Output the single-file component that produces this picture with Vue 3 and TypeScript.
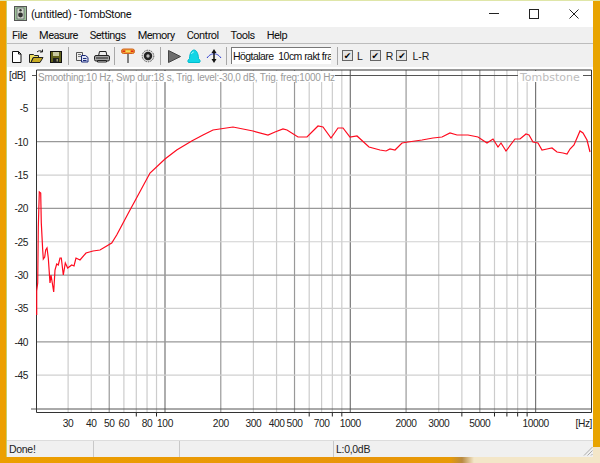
<script setup lang="ts">
const menus = ['File', 'Measure', 'Settings', 'Memory', 'Control', 'Tools', 'Help']
const fx = (f: number) => 165 + 185.3 * Math.log10(f / 100)
const minor = [30, 40, 60, 70, 80, 90, 300, 400, 600, 700, 800, 900, 3000, 4000, 6000, 7000, 8000, 9000]
const mid = [50, 200, 500, 2000, 5000]
const major = [100, 1000, 10000]
const labelled = [30, 40, 50, 60, 80, 100, 200, 300, 400, 500, 700, 1000, 2000, 3000, 5000, 10000]
const all = [...minor, ...mid, ...major]
const unlabelled = all.filter((f) => !labelled.includes(f))
const fy = (d: number) => 75 + 6.67 * d
const dbs = [5, 10, 15, 20, 25, 30, 35, 40, 45]
const darkDb = [10, 20, 30, 40]
const curve: number[][] = [
  [36.7, 315], [36.7, 291], [37.7, 283], [38.3, 227], [39.3, 192], [40.7, 193], [41.3, 223], [42.7, 250], [43.3, 259],
  [44.7, 257], [45.7, 250], [47, 248], [48.3, 258], [50, 283], [51, 275], [52.3, 283], [53.7, 292], [55, 270],
  [56.7, 264], [58.3, 265], [60, 258], [61.3, 258], [63.3, 275], [65.3, 263], [67.7, 268], [71.7, 265], [74, 266],
  [76, 258], [80, 260], [86, 253], [93, 251], [100, 250], [111.7, 243], [116.7, 235], [130, 210], [136, 199],
  [150, 173], [165, 159], [176.7, 150], [191.7, 141], [203, 135], [213, 130], [233, 127], [253, 131], [268, 135],
  [275, 132], [283, 129], [287, 130], [298, 137], [307, 137], [318, 126], [323, 127], [331, 138], [338, 128],
  [343, 128], [350, 137], [357, 136], [369, 147], [380, 150], [386, 151], [390, 149], [395, 150], [402, 143],
  [408, 142], [422, 140], [433, 138], [442, 137], [450, 133], [457, 135], [468, 135], [478, 137], [487, 143],
  [493, 139], [498, 147], [501, 143], [506, 151], [515, 139], [520, 139], [526, 134], [529, 135], [533, 142],
  [538, 143], [542, 150], [547, 149], [552, 148], [557, 152], [563, 153], [567, 154], [570, 149], [574, 145],
  [580, 131], [583, 133], [587, 140], [590, 152],
]
const curvePoints = curve.map((p) => p.join(',')).join(' ')
</script>

<template>
  <div class="desk">
    <div class="window">
      <header class="title">
        <svg class="appicon" width="14" height="16" viewBox="0 0 14 16">
          <rect x=".5" y=".5" width="12" height="14" fill="#9fc39a" stroke="#555" />
          <rect x="3" y="2" width="7" height="11" fill="#cfd8c8" stroke="#445" stroke-width=".6" />
          <circle cx="6.500" cy="9" r="2.400" fill="#333" />
          <circle cx="6.500" cy="4.200" r="1.200" fill="#333" />
        </svg>
        <span class="title-text">(untitled) - TombStone</span>
        <span class="caps">
          <svg width="10" height="10" viewBox="0 0 10 10"><path d="M0 4.500h10" stroke="#222" /></svg>
          <svg width="10" height="10" viewBox="0 0 10 10"><rect x=".5" y=".5" width="9" height="9" fill="none" stroke="#222" /></svg>
          <svg width="10" height="10" viewBox="0 0 10 10"><path d="M.5.5l9 9M9.500.5l-9 9" stroke="#222" /></svg>
        </span>
      </header>
      <nav class="menu">
        <span v-for="m in menus" :key="m">{{ m }}</span>
      </nav>
      <div class="toolbar">
        <span class="btn first">
          <svg width="16" height="16" viewBox="0 0 16 16"><path d="M3.500 3.500h6l2.500 2.500v8.500h-8.500z" fill="#fff" stroke="#111" /><path d="M9.500 3.500v2.500h2.500" fill="none" stroke="#111" /></svg>
        </span>
        <span class="btn">
          <svg width="16" height="16" viewBox="0 0 16 16"><path d="M1.500 6.500h4l1 1h4v2H5l-2 5H1.500z" fill="#efe060" stroke="#222" /><path d="M3 14.500l2.500-5h9.500l-3 5z" fill="#c9ac22" stroke="#222" /><path d="M9 4c1.500-1.500 3.500-1.500 5-.5M14.500 1.500V4H12" fill="none" stroke="#222" /></svg>
        </span>
        <span class="btn">
          <svg width="16" height="16" viewBox="0 0 16 16"><rect x="2.500" y="3.500" width="11" height="11" fill="#62621c" stroke="#111" /><rect x="5" y="4" width="6" height="4" fill="#c9c9a0" /><rect x="5" y="10" width="6" height="4.500" fill="#222" /><rect x="8.500" y="11" width="1.500" height="2.500" fill="#999970" /></svg>
        </span>
        <span class="sep"></span>
        <span class="btn">
          <svg width="16" height="16" viewBox="0 0 16 16"><path d="M2.500 4.500h6v8h-6z" fill="#eee" stroke="#555" /><path d="M4 6.500h3M4 8.500h3" stroke="#777" /><path d="M7.500 7.500h4l2.500 2v4.500H7.500z" fill="#dfe4f5" stroke="#1a2a7a" /><path d="M9 10.500h3.500M9 12.500h3.500" stroke="#1a2a7a" /></svg>
        </span>
        <span class="btn">
          <svg width="16" height="16" viewBox="0 0 16 16"><path d="M4.500 8l1-4.500h6.500l1 4.500" fill="#eee" stroke="#222" /><rect x=".5" y="7.500" width="15" height="5.500" rx="1.500" fill="#a5a5a5" stroke="#222" /><path d="M2 10h12" stroke="#222" /><path d="M3.500 12.500h9v1.500h-9z" fill="#ddd" stroke="#222" /></svg>
        </span>
        <span class="sep"></span>
        <span class="btn">
          <svg width="16" height="16" viewBox="0 0 16 16"><path d="M8 5v10" stroke="#5c5c5c" stroke-width="1.500" /><rect x="1.500" y="1" width="13" height="4.500" rx="2" fill="#f0a030" stroke="#d06020" /><path d="M2.500 3.200h2.500M11 3.200h2.500" stroke="#e02818" stroke-width="1.500" /><path d="M6 3.200h4" stroke="#f6e060" stroke-width="1.500" /></svg>
        </span>
        <span class="btn">
          <svg width="16" height="16" viewBox="0 0 16 16"><circle cx="8" cy="8" r="5.800" fill="#ddd" stroke="#555" stroke-dasharray="1.500 1" /><circle cx="8" cy="8" r="4.200" fill="#222" /><circle cx="8" cy="8" r="1.700" fill="#bbb" /></svg>
        </span>
        <span class="sep"></span>
        <span class="btn">
          <svg width="16" height="16" viewBox="0 0 16 16"><path d="M2.500 2.500L14.500 8.500 2.500 14.500z" fill="#6e6e6e" stroke="#444" /></svg>
        </span>
        <span class="btn">
          <svg width="16" height="16" viewBox="0 0 16 16"><path d="M2.500 14.500c-1.500-1.500 0-3 1-4 .2-5 2-8.500 4.500-8.500s4.300 3.500 4.500 8.500c1 1 2.500 2.500 1 4z" fill="#12d6e6" stroke="#0bc" /><path d="M5.500 6c.4-1.200 1.200-1.800 2.200-2" stroke="#bff" fill="none" /></svg>
        </span>
        <span class="btn">
          <svg width="16" height="16" viewBox="0 0 16 16"><path d="M1 10C3.500 6.500 6 5.800 8 5.800s4.500.7 7 4.200" fill="none" stroke="#2b3bd0" /><path d="M8 3v10" stroke="#111" stroke-width="1.500" /><path d="M5.500 5L8 1l2.500 4zM5.500 11L8 15l2.500-4z" fill="#111" /></svg>
        </span>
        <span class="sep last"></span>
        <span class="combo">Högtalare&nbsp; 10cm rakt fra</span>
        <span class="sep chk"></span>
        <label class="check l"><i class="box">✔</i>L</label>
        <label class="check r"><i class="box">✔</i>R</label>
        <label class="check lr"><i class="box">✔</i>L-R</label>
      </div>
      <svg class="plot" viewBox="7 67 586 373" width="586" height="373">
        <line v-for="f in all" :key="'g' + f" :x1="fx(f)" :x2="fx(f)" y1="70" y2="412"
          :stroke="major.includes(f) ? '#777' : mid.includes(f) ? '#999' : '#ccc'" stroke-width="1.200" />
        <line v-for="f in unlabelled" :key="'t' + f" :x1="fx(f)" :x2="fx(f)" y1="412" y2="416.500" stroke="#222" />
        <line v-for="d in dbs" :key="'h' + d" x1="37" x2="591" :y1="fy(d)" :y2="fy(d)"
          :stroke="darkDb.includes(d) ? '#999' : '#d0d0d0'" stroke-width="1.200" />
        <path d="M32 75.500h559M31 409h560" stroke="#555" fill="none" />
        <rect x="37" y="71" width="298" height="11" fill="#fff" />
        <rect x="518" y="71" width="65" height="11" fill="#fff" />
        <path d="M36.500 70v342.500H591.500V70H36.500" fill="none" stroke="#333" />
        <text class="info" x="38" y="81">Smoothing:10 Hz, Swp dur:18 s, Trig. level:-30,0 dB, Trig. freq:1000 Hz</text>
        <text class="brand" x="520" y="81">Tombstone</text>
        <text class="lab" x="9" y="79">[dB]</text>
        <text v-for="d in dbs" :key="'y' + d" class="lab" x="28" text-anchor="end" :y="fy(d) + 4">-{{ d }}</text>
        <text v-for="f in labelled" :key="'x' + f" class="lab" :x="fx(f)" y="427" text-anchor="middle">{{ f }}</text>
        <text class="lab" x="575.500" y="427">[Hz]</text>
        <polyline :points="curvePoints" fill="none" stroke="#ff0a1e" stroke-width="1.200" />
      </svg>
      <footer class="status">
        <span class="pane p1">Done!</span>
        <span class="pane p2"></span>
        <span class="pane p3"></span>
        <span class="pane p4">L:0,0dB
          <svg class="grip" width="10" height="10" viewBox="0 0 10 10"><path d="M9.500 1L1 9.500M9.500 4.500L4.500 9.500M9.500 8L8 9.500" stroke="#aaa" /></svg>
        </span>
      </footer>
    </div>
  </div>
</template>

<style>
html, body { margin: 0; padding: 0; }
</style>

<style scoped>
.desk {
  width: 600px; height: 463px; box-sizing: border-box; padding: 1px 7px 6px 6px; overflow: hidden;
  background:
    linear-gradient(90deg, transparent 75%, #b98a40 77%, #f3e6c8 79%) left bottom / 100% 6px no-repeat,
    linear-gradient(#f3e6c8, #f3e6c8) right bottom / 7px 16px no-repeat,
    linear-gradient(90deg, #ec9f00 0%, #e8950a 60%, #e8a400 100%);
  box-shadow: inset 0 1px 0 #dfe6a8;
  font-family: "Liberation Sans", Arial, sans-serif;
}
.window {
  width: 587px; height: 456px; box-sizing: border-box; border-left: 1px solid #c9cf6a; background: #f0f0f0;
  display: flex; flex-direction: column; overflow: hidden;
}
.title {
  height: 26px; flex: none; background: #fff; display: flex; align-items: center; padding-left: 7px;
  font: 11px Roboto, sans-serif; letter-spacing: -.4px; color: #111;
}
.appicon { margin-right: 2px; }
.title-text { flex: 1; margin-left: 1px; }
.caps { display: flex; gap: 30px; padding-right: 14px; margin-top: -1px; }
.menu {
  height: 17px; box-sizing: border-box; flex: none; display: flex; gap: 12px; padding-left: 5px; align-items: center; background: #f0f0f0;
  font: 11px Roboto, sans-serif; letter-spacing: -.55px; color: #111; border-bottom: 1px solid #bcbcbc;
}
.toolbar { height: 23px; flex: none; display: flex; align-items: center; }
.btn { width: 20px; height: 20px; display: flex; align-items: center; justify-content: center; flex: none; }
.first { width: 19px; }
.sep { width: 6px; height: 18px; flex: none; position: relative; }
.sep::after { content: ""; position: absolute; left: 2px; top: 0; bottom: 0; width: 1px; background: #a8a8a8; }
.last { width: 7px; }
.chk { margin-left: 4px; }
.combo {
  width: 100px; height: 17px; box-sizing: border-box; flex: none; background: #fff; border-left: 1px solid #777; border-top: 1px solid #777;
  font-size: 10.5px; letter-spacing: -.55px; line-height: 16px; color: #111; white-space: nowrap; overflow: hidden; padding-left: 1px;
}
.check { display: flex; align-items: center; font-size: 10.5px; color: #222; flex: none; }
.box {
  width: 9px; height: 9px; border: 1px solid #666; background: #e4e4e4; margin-right: 5px; display: flex; align-items: center; justify-content: center;
  font-style: normal; font-size: 9px; color: #000; font-family: "DejaVu Sans", sans-serif;
}
.l { margin-left: 1px; }
.l .box { margin-right: 4px; }
.r { margin-left: 7px; }
.lr { margin-left: 3px; }
.plot { display: block; flex: none; background: #fff; }
.lab { font: 10.2px "Liberation Sans", sans-serif; fill: #222; letter-spacing: -.4px; }
.info { font: 10px "Liberation Sans", sans-serif; fill: #9a9a9a; letter-spacing: -.25px; }
.brand { font: 11px "DejaVu Sans", sans-serif; fill: #bdbdbd; }
.status { height: 17px; flex: none; display: flex; background: #f0f0f0; font-size: 10.5px; letter-spacing: -.3px; color: #222; border-top: 1px solid #dcdcdc; box-sizing: border-box; }
.pane { position: relative; box-sizing: border-box; border-left: 1px solid #c8c8c8; padding-left: 2px; line-height: 16px; }
.p1 { width: 86px; border-left: 0; padding-left: 2px; }
.p2 { width: 86px; }
.p3 { width: 154px; }
.p4 { flex: 1; }
.grip { position: absolute; right: 0; bottom: 1px; }
</style>
